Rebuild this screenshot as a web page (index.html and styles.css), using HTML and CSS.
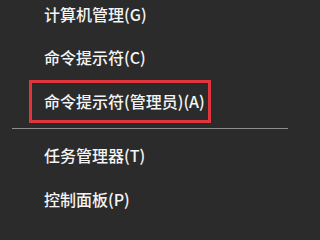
FILE: index.html
```html
<!DOCTYPE html>
<html lang="zh-CN">
<head>
<meta charset="utf-8">
<link rel="stylesheet" href="styles.css">
</head>
<body>
<ul class="menu">
  <li class="item">计算机管理(G)</li>
  <li class="item">命令提示符(C)</li>
  <li class="item item-marked">命令提示符(管理员)(A)<span class="mark"></span></li>
  <li class="sep"></li>
  <li class="item">任务管理器(T)</li>
  <li class="item">控制面板(P)</li>
</ul>
</body>
</html>
```
FILE: styles.css
```css
html, body {
  margin: 0;
  padding: 0;
  background: #2b2b2b;
}
body {
  width: 300px;
  height: 210px;
  overflow: hidden;
}
.menu {
  list-style: none;
  margin: -8px 0 0 0;
  padding: 0;
  font-family: "Noto Sans CJK SC", "Liberation Sans", sans-serif;
  font-size: 16px;
  font-weight: 500;
  color: #f4f4f4;
}
.item {
  position: relative;
  height: 43.5px;
  display: flex;
  align-items: center;
  padding-left: 44px;
  white-space: nowrap;
}
.mark {
  position: absolute;
  left: 29px;
  top: 1px;
  width: 182px;
  height: 43px;
  box-sizing: border-box;
  border: 3.5px solid #e0353b;
}
.sep {
  height: 1.5px;
  margin: 5px 12px 4.5px 12px;
  background: #8e8e8e;
}
```
